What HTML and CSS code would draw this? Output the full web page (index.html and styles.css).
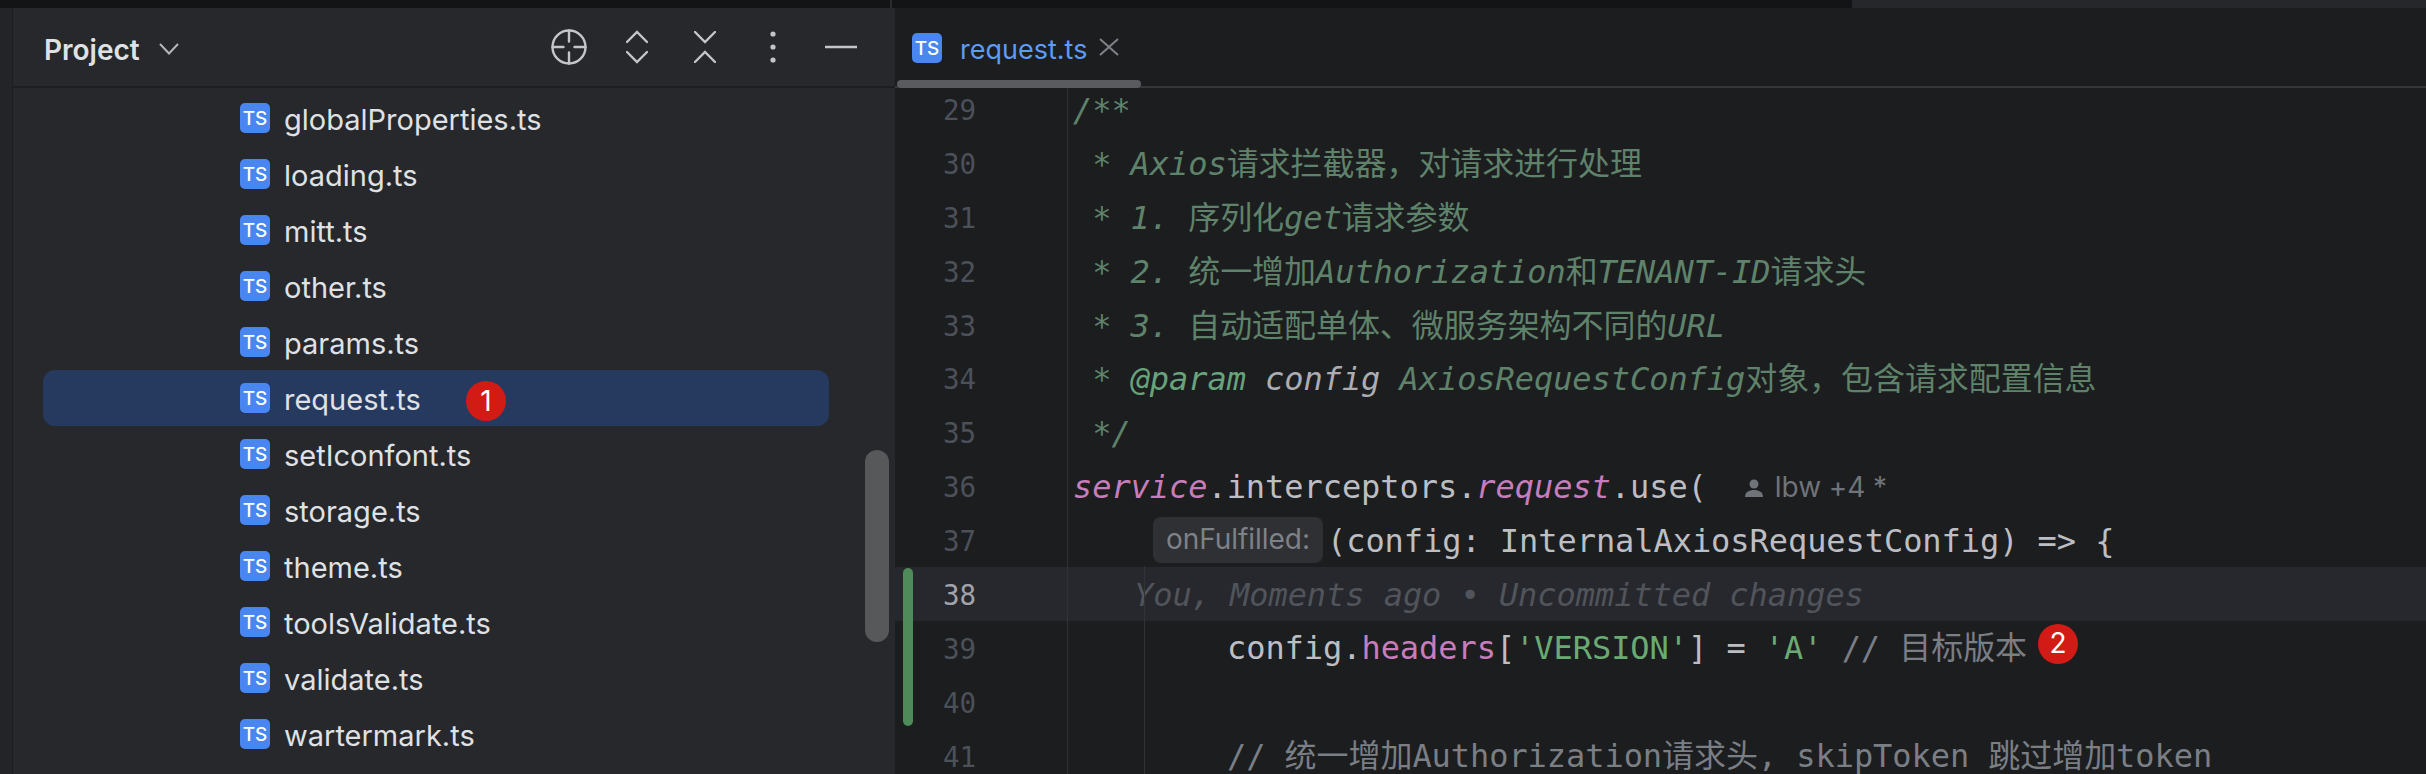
FILE: index.html
```html
<!DOCTYPE html>
<html lang="zh-CN">
<head>
<meta charset="utf-8">
<title>request.ts</title>
<link rel="stylesheet" href="styles.css">
</head>
<body>
<div class="topbar"><div class="top-a"></div><div class="top-b"></div><div class="top-c"></div></div>
<div class="main">
  <div class="strip"></div>
  <aside class="sidebar">
    <header class="side-head">
      <span class="project">Project</span>
      <svg class="chev" width="20" height="12" viewBox="0 0 20 12"><path d="M1 1l9 9.500L19 1"/></svg>
      <div class="tools">
        <span class="tool"><svg width="36" height="36" viewBox="0 0 36 36"><circle cx="18" cy="18" r="16.500"/><path d="M18 1.500v11M18 23.500v11M1.500 18h11M23.500 18h11"/></svg></span>
        <span class="tool"><svg width="22" height="34" viewBox="0 0 22 34"><path d="M1 12L11 2l10 10M1 22l10 10 10-10"/></svg></span>
        <span class="tool"><svg width="22" height="32" viewBox="0 0 22 32"><path d="M1 1l10 10L21 1M1 31l10-10 10 10"/></svg></span>
        <span class="tool"><svg width="6" height="32" viewBox="0 0 6 32"><circle cx="3" cy="3" r="2.600"/><circle cx="3" cy="16" r="2.600"/><circle cx="3" cy="29" r="2.600"/></svg></span>
        <span class="tool"><svg width="32" height="4" viewBox="0 0 32 4"><path d="M0 2h32"/></svg></span>
      </div>
    </header>
    <ul class="files">
      <li class="file"><span class="ts">TS</span><span class="fname">globalProperties.ts</span></li>
      <li class="file"><span class="ts">TS</span><span class="fname">loading.ts</span></li>
      <li class="file"><span class="ts">TS</span><span class="fname">mitt.ts</span></li>
      <li class="file"><span class="ts">TS</span><span class="fname">other.ts</span></li>
      <li class="file"><span class="ts">TS</span><span class="fname">params.ts</span></li>
      <li class="file selected"><span class="ts">TS</span><span class="fname">request.ts</span><span class="badge badge-one">1</span></li>
      <li class="file"><span class="ts">TS</span><span class="fname">setIconfont.ts</span></li>
      <li class="file"><span class="ts">TS</span><span class="fname">storage.ts</span></li>
      <li class="file"><span class="ts">TS</span><span class="fname">theme.ts</span></li>
      <li class="file"><span class="ts">TS</span><span class="fname">toolsValidate.ts</span></li>
      <li class="file"><span class="ts">TS</span><span class="fname">validate.ts</span></li>
      <li class="file"><span class="ts">TS</span><span class="fname">wartermark.ts</span></li>
    </ul>
    <div class="scrollbar"></div>
  </aside>
  <section class="editor">
    <div class="tabs">
      <div class="tab">
        <span class="ts">TS</span><span class="tab-name">request.ts</span>
        <svg class="close" width="20" height="18" viewBox="0 0 20 18"><path d="M1 1l18 16M19 1L1 17"/></svg>
      </div>
    </div>
    <div class="body">
      <div class="lines">
        <div class="line"><span class="num">29</span><code class="code doc">/**</code></div>
        <div class="line"><span class="num">30</span><code class="code doc"> * Axios请求拦截器，对请求进行处理</code></div>
        <div class="line"><span class="num">31</span><code class="code doc"> * 1. 序列化get请求参数</code></div>
        <div class="line"><span class="num">32</span><code class="code doc"> * 2. 统一增加Authorization和TENANT-ID请求头</code></div>
        <div class="line"><span class="num">33</span><code class="code doc"> * 3. 自动适配单体、微服务架构不同的URL</code></div>
        <div class="line"><span class="num">34</span><code class="code doc"> * <span class="tag">@param</span> <span class="pname">config</span> AxiosRequestConfig对象，包含请求配置信息</code></div>
        <div class="line"><span class="num">35</span><code class="code doc"> */</code></div>
        <div class="line"><span class="num">36</span><code class="code"><span class="txt"><i class="prop">service</i>.interceptors.<i class="prop">request</i>.use(</span><span class="author"><svg width="18" height="18" viewBox="0 0 18 18"><circle cx="9" cy="5" r="4.500"/><path d="M0 18c0-5 4-7 9-7s9 2 9 7z"/></svg>lbw +4 *</span></code></div>
        <div class="line"><span class="num">37</span><code class="code"><span class="chip">onFulfilled:</span><span class="txt">(config: InternalAxiosRequestConfig) =&gt; {</span></code></div>
        <div class="line current"><span class="num">38</span><code class="code"><i class="blame">You, Moments ago • Uncommitted changes</i></code></div>
        <div class="line"><span class="num">39</span><code class="code deep"><span class="txt">config.<span class="prop">headers</span>[<span class="str">'VERSION'</span>] = <span class="str">'A'</span> <span class="cmt">// 目标版本</span></span><span class="badge badge-two">2</span></code></div>
        <div class="line"><span class="num">40</span><code class="code"></code></div>
        <div class="line"><span class="num">41</span><code class="code deep"><span class="cmt">// 统一增加Authorization请求头, skipToken 跳过增加token</span></code></div>
      </div>
      <div class="guide"></div>
      <div class="change"></div>
    </div>
  </section>
</div>
</body>
</html>
```

FILE: styles.css
```css
* { box-sizing: border-box; }
html, body { margin: 0; height: 774px; overflow: hidden; background: #1e1f22; }
body { font-family: Inter, "Noto Sans CJK SC", sans-serif; color: #dfe1e5; }

.topbar { display: flex; height: 8px; background: #131415; }
.top-a { width: 890px; }
.top-b { width: 962px; border-left: 2px solid #2b2c2e; }
.top-c { flex: 1; background: #25272a; }

.main { display: flex; height: 766px; }
.strip { width: 13px; background: #232427; border-right: 1px solid #1c1d1f; }

.sidebar { position: relative; width: 882px; background: #27282b; }
.side-head { display: flex; align-items: center; height: 80px; padding-left: 31px; border-bottom: 2px solid #1d1e20; }
.project { margin-top: 5px; font-size: 28px; font-weight: 600; color: #dfe1e5; }
.chev { margin-left: 19px; margin-top: 4px; fill: none; stroke: #b4b6bc; stroke-width: 2; }
.tools { display: flex; margin-left: auto; margin-right: 20px; }
.tool { display: flex; align-items: center; justify-content: center; width: 68px; }
.tool svg { fill: none; stroke: #c3c5ca; stroke-width: 2.400; stroke-linecap: round; }
.tool:nth-child(4) svg { fill: #c3c5ca; stroke: none; }

.files { list-style: none; margin: 2px 0 0; padding: 0; }
.file { display: flex; align-items: center; height: 56px; margin-left: 30px; width: 786px; padding-left: 197px; font-size: 29px; border-radius: 12px; }
.fname { padding-top: 3px; }
.selected { background: #263a60; }
.ts { display: flex; align-items: center; justify-content: center; flex: none; width: 30px; height: 30px; margin-right: 14px; border-radius: 5px; background: #4a86f2; color: #fff; font-size: 19px; font-weight: 500; }

.badge { display: flex; align-items: center; justify-content: center; flex: none; width: 40px; height: 40px; border-radius: 50%; background: #d21b15; color: #fff; font-family: Inter, sans-serif; font-size: 28px; font-style: normal; }
.badge-one { margin-left: 45px; margin-top: 5px; }
.badge-two { margin-left: 11px; margin-bottom: 10px; }

.scrollbar { position: absolute; left: 852px; top: 442px; width: 24px; height: 192px; border-radius: 12px; background: #57585a; }

.editor { flex: 1; min-width: 0; background: #1c1d1f; }
.tabs { height: 80px; border-bottom: 2px solid #35373b; }
.tab { position: relative; display: flex; align-items: center; width: 244px; height: 80px; margin-left: 2px; padding-left: 15px; }
.tab::after { content: ""; position: absolute; left: 0; right: 0; bottom: 0; height: 8px; border-radius: 4px; background: #5a5b5e; }
.tab .ts { margin-right: 18px; }
.tab-name { padding-top: 3px; font-size: 27px; color: #5e9bf5; }
.close { margin-left: 12px; margin-top: -2px; fill: none; stroke: #7f8289; stroke-width: 2; }

.body { position: relative; height: 686px; overflow: hidden; }
.lines { margin-top: -6px; }
.line { display: flex; height: 53.900px; }
.num { flex: none; width: 173px; padding-left: 48px; padding-top: 2px; border-right: 1px solid #303236; font: 27.500px/53.900px "DejaVu Sans Mono", monospace; color: #4b5059; }
.code { display: flex; align-items: center; flex: 1; padding-left: 5px; font: 32px/53.900px "DejaVu Sans Mono", "Noto Sans CJK SC", monospace; letter-spacing: -0.060px; color: #bcbec4; white-space: pre; }
.txt { display: block; }
.current { background: #26282d; }
.current .num { color: #a1a3ab; }
.current .code { padding-top: 3px; }

.doc { display: block; padding-top: 2px; font-style: italic; font-synthesis: none; color: #5f826b; }
.tag { color: #67a37c; }
.pname { color: #abadb3; }
.prop { color: #c77dbb; }
.str { color: #6aab73; }
.cmt { color: #7a7e85; }
.code:not(.doc) { padding-top: 3px; }
.deep { padding-left: 159px; }
.blame { margin-left: 61px; color: #51545a; }

.author { display: flex; align-items: center; margin-left: 38px; font-family: Inter, sans-serif; font-size: 28px; color: #6f737a; }
.author svg { margin-right: 12px; fill: #6f737a; }
.chip { display: flex; align-items: center; justify-content: center; flex: none; width: 170px; height: 46px; margin-left: 80px; margin-right: 4px; margin-bottom: 3px; border-radius: 8px; background: #2e3033; color: #7e8188; font-family: Inter, sans-serif; font-size: 28px; }

.guide { position: absolute; left: 249px; top: 478px; bottom: 0; width: 1px; background: #303236; }
.change { position: absolute; left: 8px; top: 480px; width: 10px; height: 158px; border-radius: 5px; background: #4f8a5b; }
```
